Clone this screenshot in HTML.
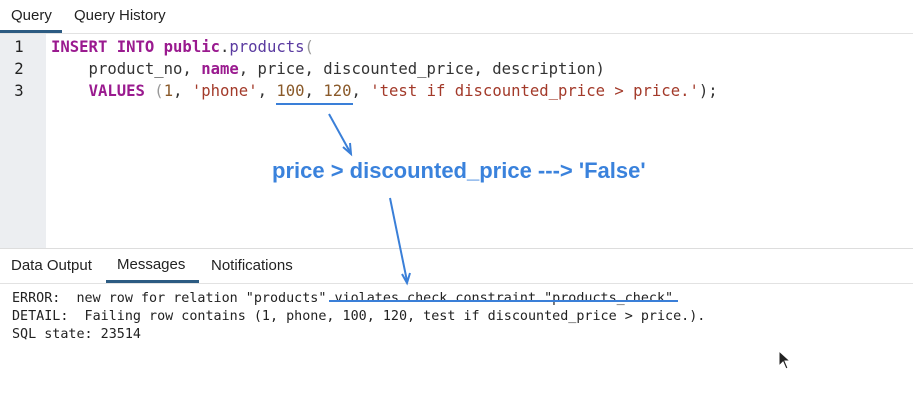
<!DOCTYPE html>
<html><head><meta charset="utf-8"><style>
*{margin:0;padding:0;box-sizing:border-box}
body{width:913px;height:420px;background:#fff;position:relative;overflow:hidden;font-family:"Liberation Sans",sans-serif;color:#222}
.tab{position:absolute;font-size:15px;color:#222}
.mono{font-family:"DejaVu Sans Mono","Liberation Mono",monospace}
.code{position:absolute;left:51px;font-size:15.6px;white-space:pre;color:#333}
.ln{position:absolute;width:46px;text-align:center;font-size:15.6px;color:#222;left:-4px}
.k{color:#9a1a8f;font-weight:bold}
.f{color:#5a3aa0}
.s{color:#a33a2a}
.n{color:#8a5a2a}
.p{color:#999}
.msg{position:absolute;left:12px;font-size:13.4px;white-space:pre;color:#222}
</style></head><body>
<div class="tab" style="left:11px;top:7px">Query</div>
<div class="tab" style="left:74px;top:7px">Query History</div>
<div style="position:absolute;left:0;top:30px;width:62px;height:3px;background:#2c5b82"></div>
<div style="position:absolute;left:0;top:33px;width:913px;height:1px;background:#e2e2e2"></div>
<div style="position:absolute;left:0;top:34px;width:46px;height:214px;background:#eceef1"></div>
<div class="mono">
<div class="ln" style="top:38px">1</div>
<div class="ln" style="top:60px">2</div>
<div class="ln" style="top:82px">3</div>
<div class="code" style="top:38px"><span class="k">INSERT INTO public</span>.<span class="f">products</span><span class="p">(</span></div>
<div class="code" style="top:60px">    product_no, <span class="k">name</span>, price, discounted_price, description)</div>
<div class="code" style="top:82px">    <span class="k">VALUES</span> <span class="p">(</span><span class="n">1</span>, <span class="s">'phone'</span>, <span class="n">100</span>, <span class="n">120</span>, <span class="s">'test if discounted_price &gt; price.'</span>);</div>
</div>
<div style="position:absolute;left:0;top:248px;width:913px;height:1px;background:#ddd"></div>
<div class="tab" style="left:11px;top:257px">Data Output</div>
<div class="tab" style="left:117px;top:256px">Messages</div>
<div class="tab" style="left:211px;top:257px">Notifications</div>
<div style="position:absolute;left:106px;top:280px;width:93px;height:3px;background:#2c5b82"></div>
<div style="position:absolute;left:0;top:283px;width:913px;height:1px;background:#e2e2e2"></div>
<div class="mono">
<div class="msg" style="top:291px">ERROR:  new row for relation "products" violates check constraint "products_check"</div>
<div class="msg" style="top:309px">DETAIL:  Failing row contains (1, phone, 100, 120, test if discounted_price &gt; price.).</div>
<div class="msg" style="top:327px">SQL state: 23514</div>
</div>
<div style="position:absolute;left:272px;top:158px;font-size:22px;font-weight:bold;color:#3a82dc;white-space:pre">price &gt; discounted_price ---&gt; 'False'</div>
<svg width="913" height="420" style="position:absolute;left:0;top:0" fill="none" stroke="#3a7fd8" stroke-width="2">
<line x1="276" y1="104" x2="353" y2="104"/>
<line x1="329" y1="114" x2="350" y2="152"/>
<path d="M343 147 L351 154 L350 143" stroke-width="2"/>
<line x1="329" y1="301" x2="678" y2="301"/>
<line x1="390" y1="198" x2="407" y2="281"/>
<path d="M402 274 L407 283 L410 273"/>
<path d="M779 351 L779 366 L783 362 L786 369 L788 368 L785 361 L790 361 Z" fill="#222" stroke="#fff" stroke-width="1"/>
</svg>
</body></html>
